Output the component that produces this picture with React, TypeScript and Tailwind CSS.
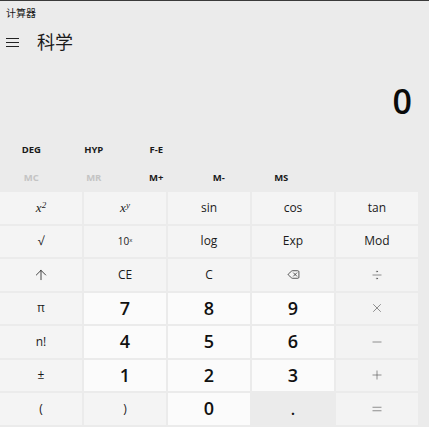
import { ArrowUp, Delete, Divide, Equal, Minus, Plus, X } from "lucide-react";

type Key = { label: React.ReactNode; kind: "fn" | "num" | "op" | "dot" };

const font = { fontFamily: '"Open Sans", "Noto Sans", "Noto Sans CJK SC", sans-serif' };

const sup = (base: string, exp: string) => (
  <span className="font-['Liberation_Serif',serif] text-[13px] italic">
    {base}
    <sup className="text-[9px]">{exp}</sup>
  </span>
);

const opIcon = "h-[14px] w-[14px] text-[#555]";

const keys: Key[] = [
  { label: sup("x", "2"), kind: "fn" },
  { label: sup("x", "y"), kind: "fn" },
  { label: "sin", kind: "fn" },
  { label: "cos", kind: "fn" },
  { label: "tan", kind: "fn" },
  { label: "√", kind: "fn" },
  {
    label: (
      <span className="text-[10px]">
        10<sup className="text-[6px]">x</sup>
      </span>
    ),
    kind: "fn",
  },
  { label: "log", kind: "fn" },
  { label: "Exp", kind: "fn" },
  { label: "Mod", kind: "fn" },
  { label: <ArrowUp className="h-[16px] w-[16px]" strokeWidth={1.2} />, kind: "fn" },
  { label: "CE", kind: "fn" },
  { label: "C", kind: "fn" },
  { label: <Delete className="h-[13px] w-[13px]" strokeWidth={1.3} />, kind: "fn" },
  { label: <Divide className={opIcon} strokeWidth={1.1} />, kind: "op" },
  { label: "π", kind: "fn" },
  { label: "7", kind: "num" },
  { label: "8", kind: "num" },
  { label: "9", kind: "num" },
  { label: <X className={opIcon} strokeWidth={1.1} />, kind: "op" },
  { label: "n!", kind: "fn" },
  { label: "4", kind: "num" },
  { label: "5", kind: "num" },
  { label: "6", kind: "num" },
  { label: <Minus className={opIcon} strokeWidth={1.1} />, kind: "op" },
  { label: "±", kind: "fn" },
  { label: "1", kind: "num" },
  { label: "2", kind: "num" },
  { label: "3", kind: "num" },
  { label: <Plus className={opIcon} strokeWidth={1.1} />, kind: "op" },
  { label: "(", kind: "fn" },
  { label: ")", kind: "fn" },
  { label: "0", kind: "num" },
  { label: ".", kind: "dot" },
  { label: <Equal className={opIcon} strokeWidth={1.1} />, kind: "op" },
];

function KeyButton({ k }: { k: Key }) {
  const base = "flex h-[31.5px] items-center justify-center";
  if (k.kind === "num")
    return <div className={`${base} bg-[#fbfbfb] text-[18px] font-semibold text-[#111]`}>{k.label}</div>;
  if (k.kind === "op") return <div className={`${base} bg-[#f3f3f3]`}>{k.label}</div>;
  if (k.kind === "dot")
    return <div className={`${base} items-end bg-[#ebebeb] pb-[4px] text-[16px] font-semibold text-[#111]`}>{k.label}</div>;
  return <div className={`${base} bg-[#f4f4f4] text-[12px] text-[#1a1a1a]`}>{k.label}</div>;
}

export default function App() {
  return (
    <div style={font} className="flex h-[427px] w-[429px] flex-col overflow-hidden border-t border-[#3a3a3a] bg-[#ebebeb] text-[#1a1a1a]">
      <div className="flex h-[25px] items-center pl-[6px] text-[10px]">计算器</div>

      <div className="flex h-[32px] items-center">
        <div className="flex w-[37px] items-center pl-[6px]">
          <div className="flex w-[13px] flex-col gap-[3px]">
            <span className="h-[1px] bg-[#222]" />
            <span className="h-[1px] bg-[#222]" />
            <span className="h-[1px] bg-[#222]" />
          </div>
        </div>
        <span className="text-[18px]">科学</span>
      </div>

      <div className="flex h-[78px] items-center justify-end pt-[8px] pr-[17px]">
        <span className="text-[34px] leading-none font-semibold text-[#0a0a0a]">0</span>
      </div>

      <div className="flex h-[28px] items-center text-[9.5px] font-bold">
        {["DEG", "HYP", "F-E"].map((t) => (
          <div key={t} className="w-[62.5px] text-center">
            {t}
          </div>
        ))}
      </div>

      <div className="flex h-[28px] items-center text-[9.5px] font-bold">
        {[
          ["MC", true],
          ["MR", true],
          ["M+", false],
          ["M-", false],
          ["MS", false],
        ].map(([t, dim]) => (
          <div key={t as string} className={`w-[62.5px] text-center ${dim ? "text-[#c4c4c4]" : ""}`}>
            {t}
          </div>
        ))}
      </div>

      <div className="grid w-[418px] grid-cols-5 gap-[2px]">
        {keys.map((k, i) => (
          <KeyButton key={i} k={k} />
        ))}
      </div>
    </div>
  );
}
